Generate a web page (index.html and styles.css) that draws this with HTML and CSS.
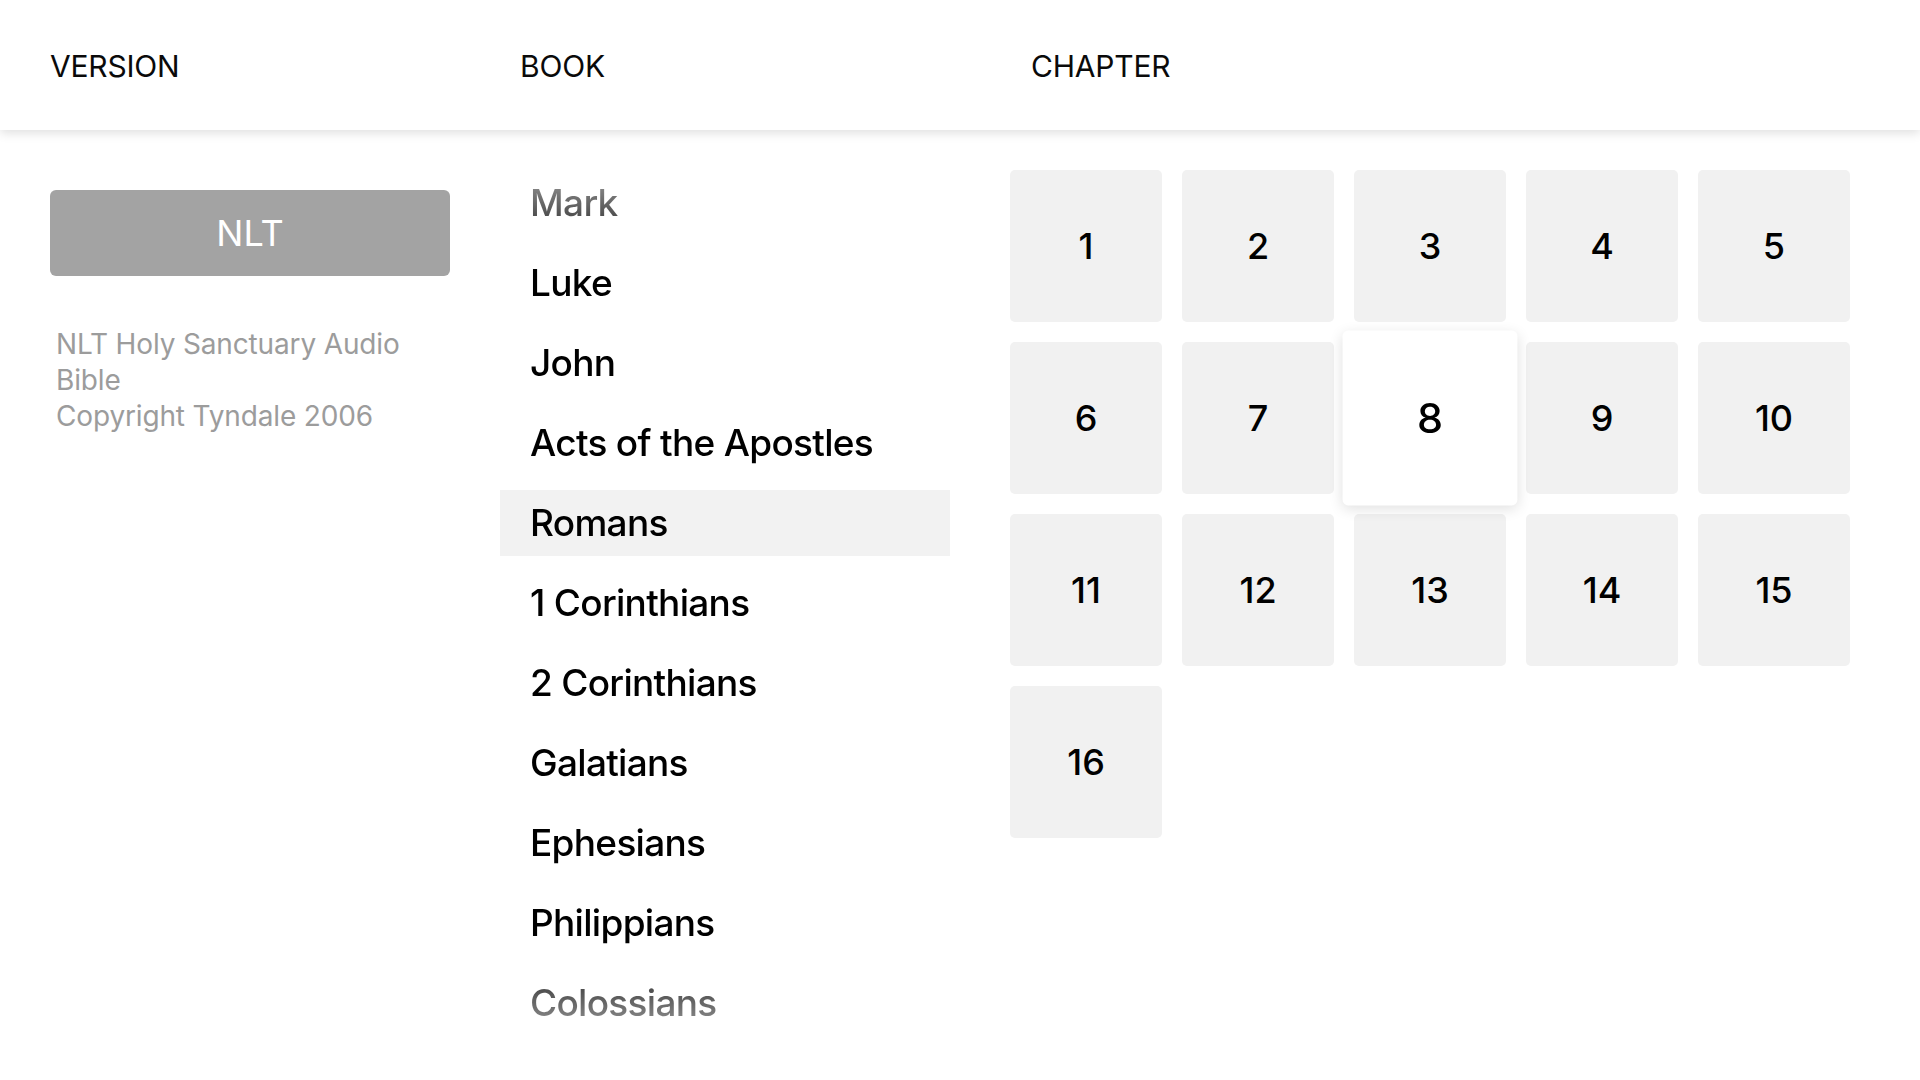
FILE: index.html
```html
<!DOCTYPE html>
<html lang="en">
<head>
<meta charset="utf-8">
<title>Bible Picker</title>
<link rel="stylesheet" href="styles.css">
</head>
<body>
<header class="topbar">
  <div class="label label-version">VERSION</div>
  <div class="label label-book">BOOK</div>
  <div class="label label-chapter">CHAPTER</div>
</header>
<main class="content">
  <section class="col col-version">
    <button class="version-btn">NLT</button>
    <p class="version-desc">NLT Holy Sanctuary Audio<br>Bible<br>Copyright Tyndale 2006</p>
  </section>
  <section class="col col-book">
    <ul class="book-list">
      <li class="book">Mark</li>
      <li class="book">Luke</li>
      <li class="book">John</li>
      <li class="book">Acts of the Apostles</li>
      <li class="book selected">Romans</li>
      <li class="book">1 Corinthians</li>
      <li class="book">2 Corinthians</li>
      <li class="book">Galatians</li>
      <li class="book">Ephesians</li>
      <li class="book">Philippians</li>
      <li class="book">Colossians</li>
    </ul>
  </section>
  <section class="col col-chapter">
    <div class="grid">
      <div class="tile">1</div>
      <div class="tile">2</div>
      <div class="tile">3</div>
      <div class="tile">4</div>
      <div class="tile">5</div>
      <div class="tile">6</div>
      <div class="tile">7</div>
      <div class="tile active">8</div>
      <div class="tile">9</div>
      <div class="tile">10</div>
      <div class="tile">11</div>
      <div class="tile">12</div>
      <div class="tile">13</div>
      <div class="tile">14</div>
      <div class="tile">15</div>
      <div class="tile">16</div>
    </div>
  </section>
</main>
</body>
</html>
```
FILE: styles.css
```css
* { box-sizing: border-box; }
html, body {
  margin: 0;
  padding: 0;
  width: 1920px;
  height: 1080px;
  overflow: hidden;
  background: #ffffff;
  font-family: Inter, "Noto Sans", "Liberation Sans", sans-serif;
  color: #000;
}

.topbar {
  position: relative;
  z-index: 2;
  height: 130px;
  padding-top: 2px;
  display: flex;
  align-items: center;
  background: #fff;
  box-shadow: 0 3px 10px rgba(0, 0, 0, 0.13);
}
.label {
  font-size: 30px;
  font-weight: 400;
  color: #0a0a0a;
  letter-spacing: -0.2px;
}
.label-version { margin-left: 50px; width: 470px; }
.label-book { width: 511px; }

.content {
  display: flex;
  padding-top: 40px;
}
.col-version {
  margin-left: 50px;
  width: 400px;
  padding-top: 20px;
}
.version-btn {
  display: block;
  width: 400px;
  height: 86px;
  border: none;
  border-radius: 6px;
  background: #a3a3a3;
  color: #fff;
  font-family: inherit;
  font-size: 36px;
  font-weight: 400;
  padding: 0;
}
.version-desc {
  margin: 50px 0 0 6px;
  font-size: 28px;
  line-height: 36px;
  color: #9c9c9c;
  letter-spacing: -0.15px;
}

.col-book {
  margin-left: 50px;
  width: 450px;
}
.book-list {
  list-style: none;
  margin: 0;
  padding: 0;
  display: flex;
  flex-direction: column;
  gap: 14px;
  -webkit-mask-image: linear-gradient(to bottom, rgba(0,0,0,0.36) 0, #000 90px, #000 calc(100% - 90px), rgba(0,0,0,0.36) 100%);
  mask-image: linear-gradient(to bottom, rgba(0,0,0,0.36) 0, #000 90px, #000 calc(100% - 90px), rgba(0,0,0,0.36) 100%);
}
.book {
  height: 66px;
  line-height: 66px;
  padding-left: 30px;
  font-size: 37px;
  font-weight: 500;
  letter-spacing: -0.7px;
  color: #000;
}
.book.selected { background: #f2f2f2; }

.col-chapter {
  margin-left: 60px;
}
.grid {
  display: grid;
  grid-template-columns: repeat(5, 152px);
  grid-auto-rows: 152px;
  gap: 20px;
}
.tile {
  display: flex;
  align-items: center;
  justify-content: center;
  background: #f1f1f1;
  border-radius: 5px;
  font-size: 36px;
  font-weight: 500;
  color: #000;
}
.tile.active {
  position: relative;
  z-index: 1;
  background: #fff;
  transform: scale(1.15);
  box-shadow: 0 3px 12px rgba(0, 0, 0, 0.12);
}
```
